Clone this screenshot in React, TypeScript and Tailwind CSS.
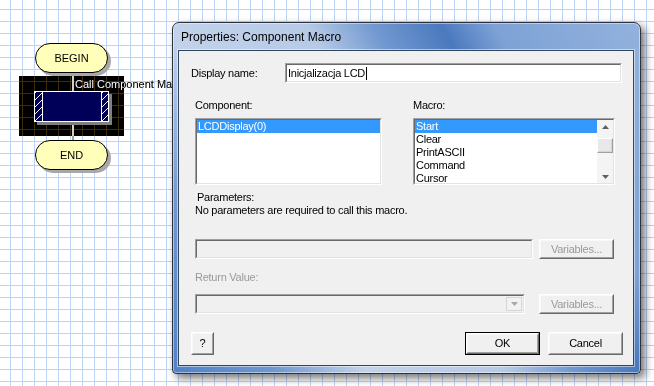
import React from "react";

const sunkenOuter =
  "border border-t-[#a0a0a0] border-l-[#a0a0a0] border-r-white border-b-white";
const sunkenInner =
  "border border-t-[#696969] border-l-[#696969] border-r-[#e3e3e3] border-b-[#e3e3e3]";
const raisedOuter =
  "border border-t-white border-l-white border-r-[#696969] border-b-[#696969]";
const raisedInner =
  "border border-t-[#f8f8f8] border-l-[#f8f8f8] border-r-[#a0a0a0] border-b-[#a0a0a0] bg-[#f0f0f0]";

function Sunken({
  className,
  innerClassName,
  children,
}: {
  className: string;
  innerClassName: string;
  children?: React.ReactNode;
}) {
  return (
    <div className={`${sunkenOuter} ${className}`}>
      <div className={`${sunkenInner} w-full h-full ${innerClassName}`}>{children}</div>
    </div>
  );
}

function Button({
  className,
  children,
  disabled,
  isDefault,
}: {
  className: string;
  children: React.ReactNode;
  disabled?: boolean;
  isDefault?: boolean;
}) {
  const body = (
    <div className={`${raisedOuter} w-full h-full`}>
      <div
        className={`${raisedInner} w-full h-full flex items-center justify-center ${
          disabled ? "text-[#9a9a9a]" : "text-black"
        }`}
      >
        {children}
      </div>
    </div>
  );
  if (isDefault) {
    return <div className={`border border-black ${className}`}>{body}</div>;
  }
  return <div className={className}>{body}</div>;
}

function ArrowUp({ color }: { color: string }) {
  return (
    <svg width="7" height="4" viewBox="0 0 7 4">
      <path d="M0 4 L3.5 0 L7 4 Z" fill={color} />
    </svg>
  );
}

function ArrowDown({ color }: { color: string }) {
  return (
    <svg width="7" height="4" viewBox="0 0 7 4">
      <path d="M0 0 L7 0 L3.5 4 Z" fill={color} />
    </svg>
  );
}

function Pill({ top, label }: { top: string; label: string }) {
  return (
    <div
      className={`absolute left-[35px] ${top} w-[73px] h-[30px] rounded-full border border-black bg-[#ffffb9] shadow-[3px_3px_0_#a8a8a8] flex items-center justify-center text-[11px] text-black`}
    >
      {label}
    </div>
  );
}

export default function App() {
  return (
    <div className="relative w-[654px] h-[386px] overflow-hidden bg-white bg-[linear-gradient(to_right,#bdd3f6_1px,transparent_1px),linear-gradient(to_bottom,#bdd3f6_1px,transparent_1px)] bg-size-[12px_12px] bg-position-[10px_9px] font-['Liberation_Sans',Arial,sans-serif]">
      {/* Flowchart canvas */}
      <div className="absolute left-[19px] top-[76px] w-[105px] h-[60px] bg-black bg-[linear-gradient(to_right,#3f2a0a_1px,transparent_1px),linear-gradient(to_bottom,#3f2a0a_1px,transparent_1px)] bg-size-[12px_12px] bg-position-[3px_5px]" />
      <div className="absolute left-[72px] top-[73px] w-[2px] h-[67px] bg-[#a0a0a0]" />
      <div className="absolute left-[72px] top-[76px] w-[2px] h-[60px] bg-[#d0d0d0]" />
      <Pill top="top-[43px]" label="BEGIN" />
      <Pill top="top-[140px]" label="END" />
      <div className="absolute left-[34px] top-[91px] w-[75px] h-[31px] border border-white bg-[#000058] shadow-[3px_3px_0_#808080] flex justify-between">
        <div className="w-[8px] h-full border-r border-white bg-[repeating-linear-gradient(135deg,#ffffff_0px,#ffffff_1px,#000058_1px,#000058_5px)]" />
        <div className="w-[7px] h-full border-l border-white bg-[repeating-linear-gradient(135deg,#ffffff_0px,#ffffff_1px,#000058_1px,#000058_5px)]" />
      </div>
      <div className="absolute left-[75px] top-[78px] text-[11px] leading-[13px] text-white mix-blend-difference whitespace-nowrap">
        Call Component Macro
      </div>

      {/* Dialog window */}
      <div className="absolute left-[172px] top-[22px] w-[469px] h-[352px] rounded-t-[7px] rounded-b-[4px] border border-[#2b3340] bg-[linear-gradient(60deg,#5282c6_0%,#6f96cf_15%,#c2d2ea_29%,#b6cae7_50%,#7198d0_60%,#4b79be_70%,#7ea2d6_78%,#93b2dd_100%)] shadow-[inset_0_0_0_1px_rgba(255,255,255,0.45),4px_4px_9px_rgba(0,0,0,0.55)] flex flex-col">
        <div className="h-[27px] pl-[8px] flex items-center text-[12px] text-black">
          Properties: Component Macro
        </div>
        <div className="ml-[5px] w-[456px] h-[316px] border border-[#33465f] bg-[#f0f0f0] shadow-[0_0_0_1px_rgba(255,255,255,0.5)] flex flex-col text-[11px] tracking-[-0.25px] text-black">
          {/* Display name */}
          <div className="mt-[12px] flex items-center h-[20px]">
            <div className="ml-[12px] w-[94px] leading-[13px]">Display name:</div>
            <Sunken className="w-[337px] h-[20px]" innerClassName="bg-white flex items-center pl-[1px]">
              <span className="leading-[13px]">Inicjalizacja LCD</span>
              <span className="ml-[1px] w-[1px] h-[13px] bg-black" />
            </Sunken>
          </div>

          {/* List labels */}
          <div className="mt-[16px] flex h-[13px] leading-[13px]">
            <div className="ml-[16px] w-[218px]">Component:</div>
            <div>Macro:</div>
          </div>

          {/* Lists */}
          <div className="mt-[6px] flex">
            <Sunken className="ml-[16px] w-[187px] h-[67px]" innerClassName="bg-white">
              <div className="h-[13px] leading-[13px] bg-[#3399ff] text-white pl-[1px]">LCDDisplay(0)</div>
            </Sunken>
            <Sunken className="ml-[31px] w-[202px] h-[67px]" innerClassName="bg-white flex">
              <div className="flex-1 flex flex-col">
                <div className="h-[13px] leading-[13px] bg-[#3399ff] text-white pl-[1px]">Start</div>
                <div className="h-[13px] leading-[13px] pl-[1px]">Clear</div>
                <div className="h-[13px] leading-[13px] pl-[1px]">PrintASCII</div>
                <div className="h-[13px] leading-[13px] pl-[1px]">Command</div>
                <div className="h-[13px] leading-[13px] pl-[1px]">Cursor</div>
              </div>
              <div className="w-[16px] h-full bg-[#f4f4f4] flex flex-col">
                <div className="h-[13px] flex items-center justify-center">
                  <ArrowUp color="#606060" />
                </div>
                <div className="mt-[5px] h-[15px] border border-t-white border-l-white border-r-[#a0a0a0] border-b-[#a0a0a0] bg-[#e8e8e8] shadow-[inset_-1px_-1px_0_#d4d4d4]" />
                <div className="flex-1" />
                <div className="h-[13px] flex items-center justify-center">
                  <ArrowDown color="#606060" />
                </div>
              </div>
            </Sunken>
          </div>

          {/* Parameters */}
          <div className="mt-[6px] ml-[18px] leading-[13px]">Parameters:</div>
          <div className="ml-[16px] leading-[13px]">No parameters are required to call this macro.</div>

          <div className="mt-[22px] flex">
            <Sunken className="ml-[16px] w-[338px] h-[20px]" innerClassName="bg-[#f0f0f0]" />
            <Button className="ml-[6px] w-[75px] h-[20px]" disabled>
              Variables...
            </Button>
          </div>

          <div className="mt-[12px] ml-[16px] leading-[13px] text-[#9a9a9a]">Return Value:</div>

          <div className="mt-[10px] flex">
            <Sunken className="ml-[16px] w-[330px] h-[20px]" innerClassName="bg-[#f0f0f0] flex justify-end p-[1px]">
              <div className="w-[16px] h-full border border-[#d6d6d6] bg-[#f2f2f2] flex items-center justify-center">
                <ArrowDown color="#a8a8a8" />
              </div>
            </Sunken>
            <Button className="ml-[14px] w-[75px] h-[20px]" disabled>
              Variables...
            </Button>
          </div>

          {/* Bottom buttons */}
          <div className="mt-[18px] flex">
            <Button className="ml-[12px] w-[23px] h-[23px]">?</Button>
            <Button className="ml-[251px] w-[75px] h-[23px]" isDefault>
              OK
            </Button>
            <Button className="ml-[8px] w-[75px] h-[23px]">Cancel</Button>
          </div>
        </div>
      </div>
    </div>
  );
}
